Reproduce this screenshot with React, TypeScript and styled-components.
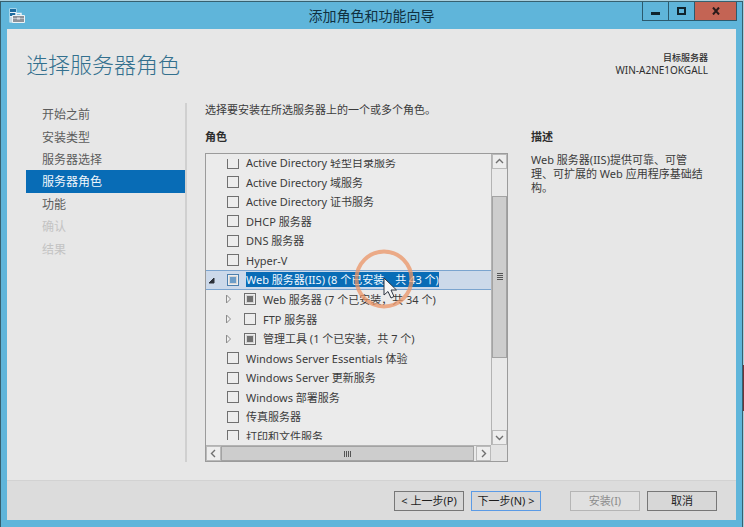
import React, { useEffect, useRef } from "react";
import styled, { createGlobalStyle, css } from "styled-components";

const GlobalStyle = createGlobalStyle`
  *, *::before, *::after { box-sizing: border-box; }
  body {
    margin: 0;
    background: #a9cfdd;
    color: #3b3b3b;
    font-family: "Noto Sans", "Noto Sans CJK SC", sans-serif;
    font-size: 11px;
    line-height: 14px;
  }
  button, input { font: inherit; margin: 0; }
`;

const Desktop = styled.div`
  display: flex;
  min-height: 100vh;
  padding: 1px 1px 0 0;
  background: linear-gradient(#a9cfdd 0 365px, #71343a 365px 411px, #a9cfdd 411px);
`;

const Window = styled.div`
  flex: 1;
  display: flex;
  flex-direction: column;
  min-width: 0;
  padding: 0 6px 7px;
  border: 1px solid #36606f;
  border-bottom: 0;
  background: #5fb5da;
`;

const TitleBar = styled.header`
  display: grid;
  grid-template-columns: 94px 1fr 94px;
  align-items: center;
  height: 27px;
`;

const Caption = styled.h1`
  margin: 0;
  color: #10303f;
  font-size: 14px;
  font-weight: 400;
  line-height: 26px;
  text-align: center;
`;

const AppIcon = styled.svg`
  display: block;
  margin-left: 2px;
`;

const WindowControls = styled.div`
  display: flex;
  align-self: start;
  justify-content: flex-end;
  margin-right: -1px;
`;

const ControlButton = styled.button<{ $close?: boolean }>`
  display: grid;
  place-items: center;
  width: ${(p) => (p.$close ? 43 : 26)}px;
  height: 19px;
  padding: 0;
  border: 1px solid #2b5a6e;
  border-top: 0;
  border-right-width: ${(p) => (p.$close ? 1 : 0)}px;
  background: ${(p) => (p.$close ? "#c46454" : "transparent")};
`;

const Client = styled.div`
  flex: 1;
  display: flex;
  flex-direction: column;
  background: #e7e7e7;
`;

const PageHead = styled.div`
  display: flex;
  justify-content: space-between;
  padding: 19px 28px 0 19px;
`;

const PageTitle = styled.h2`
  margin: 0;
  color: #33708e;
  font-family: "Noto Sans CJK SC", sans-serif;
  font-size: 22px;
  font-weight: 300;
  line-height: 30px;
`;

const Target = styled.div`
  padding-top: 4px;
  color: #2e2e2e;
  font-size: 10px;
  line-height: 12px;
  text-align: right;
`;

const TargetLabel = styled.div`
  font-size: 9px;
  font-weight: 500;
`;

const Body = styled.div`
  flex: 1;
  display: grid;
  grid-template-columns: 161px minmax(0, 1fr) 180px;
  padding: 25px 26px 18px 19px;
`;

const Steps = styled.nav`
  border-right: 2px solid #d0d0d0;
`;

const StepList = styled.div`
  display: grid;
  grid-template-rows: repeat(7, 1fr);
  height: 157px;
`;

const StepLink = styled.a<{ $current?: boolean; $disabled?: boolean }>`
  display: flex;
  align-items: center;
  padding: 2px 0 0 16px;
  color: ${(p) => (p.$current ? "#f0f6fb" : p.$disabled ? "#c3c3c3" : "#5c5c5c")};
  background: ${(p) => (p.$current ? "#086cb6" : "transparent")};
  font-size: 12px;
  line-height: 20px;
  text-decoration: none;
`;

const Roles = styled.section`
  display: flex;
  flex-direction: column;
  padding: 0 22px 0 18px;
  min-width: 0;
`;

const Intro = styled.p`
  margin: 0 0 13px;
  white-space: nowrap;
`;

const Heading = styled.h3`
  margin: 0 0 9px;
  color: #2d2d2d;
  font-size: 11px;
  font-weight: 700;
  line-height: 14px;
`;

const ListBox = styled.div`
  flex: 1;
  display: grid;
  grid-template-columns: minmax(0, 1fr) 16px;
  grid-template-rows: minmax(0, 1fr) 16px;
  border: 1px solid #9b9b9b;
  background: #ebebeb;
`;

const Viewport = styled.div`
  position: relative;
  margin: 5px 0;
  height: 281px;
  overflow: hidden;
`;

const Tree = styled.ul`
  display: grid;
  grid-template-rows: repeat(15, 1fr);
  height: 293px;
  margin: -6px 0 0;
  padding: 0;
  list-style: none;
`;

const TreeRow = styled.li<{ $level: number; $selected?: boolean }>`
  display: flex;
  align-items: center;
  padding-left: ${(p) => (p.$level ? 17 : 0)}px;
  border: solid transparent;
  border-width: 1px 0;
  white-space: nowrap;
  ${(p) =>
    p.$selected &&
    css`
      border-color: #7ba4cf;
      background: #ccd9ea;
    `}
`;

const Expander = styled.button`
  display: grid;
  place-items: center;
  width: 11px;
  height: 12px;
  padding: 0;
  border: 0;
  background: none;
`;

const ExpanderSpace = styled.span`
  width: 11px;
`;

const Choice = styled.label`
  display: flex;
  align-items: center;
  gap: 7px;
  padding-left: 10px;
`;

const CheckBox = styled.input<{ $active?: boolean }>`
  appearance: none;
  display: grid;
  place-items: center;
  width: 12px;
  height: 12px;
  border: 1px solid ${(p) => (p.$active ? "#4c7fae" : "#707070")};
  background: #ededed;
  &:indeterminate::before {
    content: "";
    width: 8px;
    height: 8px;
    background: ${(p) => (p.$active ? "#6d9dc8" : "#707070")};
    border: 1px solid #d5d5d5;
  }
`;

const RoleName = styled.span<{ $selected?: boolean }>`
  line-height: 15px;
  color: ${(p) => (p.$selected ? "#f2f8fd" : "inherit")};
  background: ${(p) => (p.$selected ? "#086cb6" : "transparent")};
`;

const ScrollBar = styled.div<{ $horizontal?: boolean }>`
  display: flex;
  flex-direction: ${(p) => (p.$horizontal ? "row" : "column")};
  background: #e9e9e9;
  border: solid #b3b3b3;
  border-width: ${(p) => (p.$horizontal ? "1px 0 0" : "0 0 0 1px")};
`;

const ScrollArrow = styled.button`
  display: grid;
  place-items: center;
  flex: 0 0 15px;
  padding: 0;
  border: 1px solid #bababa;
  background: #ededed;
`;

const Thumb = styled.div<{ $before: number; $after: number; $horizontal?: boolean }>`
  flex: 1;
  display: grid;
  place-items: center;
  margin: ${(p) =>
    p.$horizontal ? `0 ${p.$after}px 0 ${p.$before}px` : `${p.$before}px 0 ${p.$after}px`};
  border: 1px solid #a3a3a3;
  background: #cdcdcd;
`;

const Corner = styled.div`
  background: #e3e3e3;
`;

const Description = styled.section`
  padding: 27px 4px 0 1px;
`;

const DescriptionText = styled.p`
  margin: 0;
`;

const Footer = styled.footer`
  display: flex;
  justify-content: flex-end;
  gap: 7px;
  height: 40px;
  padding: 10px 19px 9px;
  border-top: 1px solid #d2d2d2;
  background: #dcdcdc;
`;

const ActionButton = styled.button<{ $primary?: boolean; $gap?: boolean }>`
  width: 70px;
  height: 20px;
  padding: 0;
  margin-left: ${(p) => (p.$gap ? 22 : 0)}px;
  border: 1px solid ${(p) => (p.$primary ? "#5b9be6" : "#777")};
  background: #d7d7d7;
  color: #1d1d1d;
  line-height: 16px;
  white-space: nowrap;
  &:disabled {
    border-color: #b5b5b5;
    background: #e0e0e0;
    color: #8c8c8c;
  }
`;

const ClickRing = styled.svg`
  position: absolute;
  left: 147px;
  top: 89px;
  pointer-events: none;
`;

type Role = {
  name: string;
  level?: number;
  partial?: boolean;
  expander?: "open" | "closed";
  selected?: boolean;
};

const roles: Role[] = [
  { name: "Active Directory 轻型目录服务" },
  { name: "Active Directory 域服务" },
  { name: "Active Directory 证书服务" },
  { name: "DHCP 服务器" },
  { name: "DNS 服务器" },
  { name: "Hyper-V" },
  { name: "Web 服务器(IIS) (8 个已安装，共 43 个)", partial: true, expander: "open", selected: true },
  { name: "Web 服务器 (7 个已安装，共 34 个)", level: 1, partial: true, expander: "closed" },
  { name: "FTP 服务器", level: 1, expander: "closed" },
  { name: "管理工具 (1 个已安装，共 7 个)", level: 1, partial: true, expander: "closed" },
  { name: "Windows Server Essentials 体验" },
  { name: "Windows Server 更新服务" },
  { name: "Windows 部署服务" },
  { name: "传真服务器" },
  { name: "打印和文件服务" },
];

const steps = [
  { name: "开始之前" },
  { name: "安装类型" },
  { name: "服务器选择" },
  { name: "服务器角色", current: true },
  { name: "功能" },
  { name: "确认", disabled: true },
  { name: "结果", disabled: true },
];

function RoleRow({ name, level = 0, partial = false, expander, selected }: Role) {
  const box = useRef<HTMLInputElement>(null);
  useEffect(() => {
    if (box.current) box.current.indeterminate = partial;
  }, [partial]);
  return (
    <TreeRow $level={level} $selected={selected}>
      {expander ? (
        <Expander aria-label={expander === "open" ? "折叠" : "展开"}>
          <svg width="11" height="12" viewBox="0 0 11 12">
            {expander === "open" ? (
              <path d="M8 4v5H3z" fill="#2c3038" stroke="#2c3038" />
            ) : (
              <path d="M3.5 2v8l4-4z" fill="#f1f1f1" stroke="#8c8c8c" />
            )}
          </svg>
        </Expander>
      ) : (
        <ExpanderSpace />
      )}
      <Choice>
        <CheckBox ref={box} type="checkbox" $active={selected} />
        <RoleName $selected={selected}>{name}</RoleName>
      </Choice>
    </TreeRow>
  );
}

function Chevron({ d }: { d: string }) {
  return (
    <svg width="9" height="9" viewBox="0 0 9 9" fill="none" stroke="#707070" strokeWidth="1.4">
      <path d={d} />
    </svg>
  );
}

function Grip({ horizontal }: { horizontal?: boolean }) {
  return (
    <svg width="8" height="8" viewBox="0 0 8 8" stroke="#555" strokeWidth="1">
      <path d={horizontal ? "M.5 1v6M2.500 1v6M4.500 1v6M6.500 1v6" : "M1 .5h6M1 2.500h6M1 4.500h6M1 6.500h6"} />
    </svg>
  );
}

export default function App() {
  return (
    <Desktop>
      <GlobalStyle />
      <Window>
        <TitleBar>
          <AppIcon width="16" height="16" viewBox="0 0 16 16">
            <path d="M.5.5h7v14h-7z" fill="#e9f3f8" />
            <path d="M1 1h6v3H1zM1 5h6v3H1z" fill="#1e6da0" />
            <path d="M1 9h3v5H1z" fill="#c5dbe6" />
            <path d="M7 8V5.500h5V8" fill="none" stroke="#e9f3f8" strokeWidth="1.5" />
            <path d="M3.500 7.500h12v7h-12z" fill="#8d9299" stroke="#eef4f7" />
            <path d="M4 10.500h4M11 10.500h4" stroke="#b9bfc5" />
            <path d="M8 9.500h3v2H8z" fill="#dcdfe2" />
          </AppIcon>
          <Caption>添加角色和功能向导</Caption>
          <WindowControls>
            <ControlButton aria-label="最小化">
              <svg width="9" height="9" viewBox="0 0 9 9"><path d="M0 5h9v3H0z" fill="#10242d" /></svg>
            </ControlButton>
            <ControlButton aria-label="最大化">
              <svg width="9" height="8" viewBox="0 0 9 8"><path d="M1 1h7v6H1z" fill="none" stroke="#10242d" strokeWidth="2" /></svg>
            </ControlButton>
            <ControlButton $close aria-label="关闭">
              <svg width="8" height="8" viewBox="0 0 8 8"><path d="M1 .5l6 7M7 .5l-6 7" stroke="#2a1a1a" strokeWidth="2" /></svg>
            </ControlButton>
          </WindowControls>
        </TitleBar>
        <Client>
          <PageHead>
            <PageTitle>选择服务器角色</PageTitle>
            <Target>
              <TargetLabel>目标服务器</TargetLabel>
              WIN-A2NE1OKGALL
            </Target>
          </PageHead>
          <Body>
            <Steps>
              <StepList>
                {steps.map((s) => (
                  <StepLink
                    key={s.name}
                    href="#"
                    $current={s.current}
                    $disabled={s.disabled}
                    aria-current={s.current ? "step" : undefined}
                    aria-disabled={s.disabled}
                  >
                    {s.name}
                  </StepLink>
                ))}
              </StepList>
            </Steps>
            <Roles>
              <Intro>选择要安装在所选服务器上的一个或多个角色。</Intro>
              <Heading>角色</Heading>
              <ListBox>
                <Viewport>
                  <Tree>
                    {roles.map((r) => (
                      <RoleRow key={r.name} {...r} />
                    ))}
                  </Tree>
                  <ClickRing width="62" height="62" viewBox="0 0 62 62">
                    <circle cx="31" cy="31" r="27.500" fill="none" stroke="#eb9465" strokeOpacity=".75" strokeWidth="4" />
                    <path d="M31 30v17l4-3.500 3 6.500 3-1.500-3-6.500h5.500z" fill="#f5f5f5" stroke="#2c3440" />
                  </ClickRing>
                </Viewport>
                <ScrollBar>
                  <ScrollArrow aria-label="向上滚动"><Chevron d="M1 6l3.500-3.500L8 6" /></ScrollArrow>
                  <Thumb $before={27} $after={72}><Grip /></Thumb>
                  <ScrollArrow aria-label="向下滚动"><Chevron d="M1 3l3.500 3.500L8 3" /></ScrollArrow>
                </ScrollBar>
                <ScrollBar $horizontal>
                  <ScrollArrow aria-label="向左滚动"><Chevron d="M6 1L2.500 4.500 6 8" /></ScrollArrow>
                  <Thumb $horizontal $before={0} $after={2}><Grip horizontal /></Thumb>
                  <ScrollArrow aria-label="向右滚动"><Chevron d="M3 1l3.500 3.500L3 8" /></ScrollArrow>
                </ScrollBar>
                <Corner />
              </ListBox>
            </Roles>
            <Description>
              <Heading>描述</Heading>
              <DescriptionText>
                Web 服务器(IIS)提供可靠、可管理、可扩展的 Web 应用程序基础结构。
              </DescriptionText>
            </Description>
          </Body>
          <Footer>
            <ActionButton>&lt; 上一步(P)</ActionButton>
            <ActionButton $primary>下一步(N) &gt;</ActionButton>
            <ActionButton $gap disabled>安装(I)</ActionButton>
            <ActionButton>取消</ActionButton>
          </Footer>
        </Client>
      </Window>
    </Desktop>
  );
}
